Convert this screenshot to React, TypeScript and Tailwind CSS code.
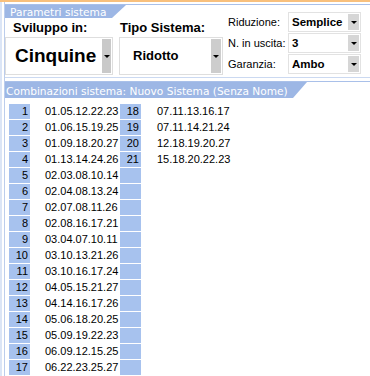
const combos: [number, string][] = [
  [1, "01.05.12.22.23"],
  [2, "01.06.15.19.25"],
  [3, "01.09.18.20.27"],
  [4, "01.13.14.24.26"],
  [5, "02.03.08.10.14"],
  [6, "02.04.08.13.24"],
  [7, "02.07.08.11.26"],
  [8, "02.08.16.17.21"],
  [9, "03.04.07.10.11"],
  [10, "03.10.13.21.26"],
  [11, "03.10.16.17.24"],
  [12, "04.05.15.21.27"],
  [13, "04.14.16.17.26"],
  [14, "05.06.18.20.25"],
  [15, "05.09.19.22.23"],
  [16, "06.09.12.15.25"],
  [17, "06.22.23.25.27"],
  [18, "07.11.13.16.17"],
  [19, "07.11.14.21.24"],
  [20, "12.18.19.20.27"],
  [21, "15.18.20.22.23"],
]

const tabShape = { clipPath: "polygon(0 0, 100% 0, calc(100% - 14px) 100%, 0 100%)" }

function Arrow({ width = "w-[11px]", color = "bg-[#d6d6d6]" }: { width?: string; color?: string }) {
  return (
    <div className={`${width} ${color} self-stretch my-[1px] mr-[1px] flex items-center justify-center`}>
      <div className="w-0 h-0 border-x-[3px] border-x-transparent border-t-[3px] border-t-black" />
    </div>
  )
}

function SmallSelect({ label, value }: { label: string; value: string }) {
  return (
    <div className="flex items-center h-[20px] mb-[1px]">
      <div className="w-[60px] text-[11px] leading-[13px] text-black">{label}</div>
      <div className="w-[73px] h-[20px] border border-[#e2e2e2] flex items-stretch">
        <div className="flex-1 pl-[3px] text-[11.5px] font-bold leading-[18px]">{value}</div>
        <Arrow />
      </div>
    </div>
  )
}

export default function App() {
  const left = combos.slice(0, 17)
  const right = combos.slice(17)

  return (
    <div className="w-[370px] h-[376px] overflow-hidden bg-white text-black font-['Liberation_Sans',Arial,sans-serif]">
      <div className="h-[2px] bg-[#f8c07d]" />
      <div className="flex h-[374px]">
        <div className="w-[2px] bg-[#dbe5f6]" />
        <div className="w-[2px]" />
        <div className="flex-1 flex flex-col border-l border-[#bccdec]">
          {/* parametri */}
          <div className="mt-[2px] border-t border-b border-t-[#a9c0e9] border-b-[#cbd9f1] h-[74px] flex">
            <div className="w-[219px] flex flex-col">
              <div
                className="h-[13px] w-[121px] bg-[#9db7e5] text-white text-[10.6px] leading-[11px] pl-[5px] pt-[2px] font-['DejaVu_Sans',Verdana,sans-serif]"
                style={tabShape}
              >
                Parametri sistema
              </div>
              <div className="flex mt-[2px]">
                <div className="w-[108px]">
                  <div className="h-[15px] pl-[8px] text-[13px] leading-[15px] font-bold">Sviluppo in:</div>
                  <div className="mt-[2px] h-[38px] border border-[#dedede] flex items-stretch">
                    <div className="flex-1 pl-[9px] text-[19px] font-bold flex items-center">Cinquine</div>
                    <Arrow width="w-[9px]" color="bg-[#c9c9c9]" />
                  </div>
                </div>
                <div className="w-[104px] ml-[6px]">
                  <div className="h-[15px] pl-[1px] text-[13px] leading-[15px] font-bold">Tipo Sistema:</div>
                  <div className="mt-[2px] h-[38px] border border-[#dedede] flex items-stretch">
                    <div className="flex-1 pl-[13px] text-[13px] font-bold flex items-center">Ridotto</div>
                    <Arrow width="w-[10px]" color="bg-[#cdcdcd]" />
                  </div>
                </div>
              </div>
            </div>
            <div className="pl-[4px] pt-[7px]">
              <SmallSelect label="Riduzione:" value="Semplice" />
              <SmallSelect label="N. in uscita:" value="3" />
              <SmallSelect label="Garanzia:" value="Ambo" />
            </div>
          </div>

          {/* combinazioni */}
          <div className="mt-[3px] border-t border-[#a9c0e9]">
            <div
              className="h-[16px] w-[302px] bg-[#9db7e5] text-white text-[10.6px] leading-[13px] pl-[1px] pt-[3px] font-['DejaVu_Sans',Verdana,sans-serif]"
              style={tabShape}
            >
              Combinazioni sistema: Nuovo Sistema (Senza Nome)
            </div>
          </div>
          <div className="mt-[6px] pl-[4px] text-[11px]">
            {left.map(([n, c], i) => {
              const r = right[i]
              return (
                <div key={n} className="flex h-[15px] mb-[1px] leading-[15px]">
                  <div className="w-[21px] bg-[#a7c2ee] text-right pr-[2px]">{n}</div>
                  <div className="w-[90px] pl-[15px]">{c}</div>
                  <div className="w-[21px] bg-[#a7c2ee] text-right pr-[2px]">{r ? r[0] : ""}</div>
                  <div className="pl-[16px]">{r ? r[1] : ""}</div>
                </div>
              )
            })}
          </div>
        </div>
      </div>
    </div>
  )
}
